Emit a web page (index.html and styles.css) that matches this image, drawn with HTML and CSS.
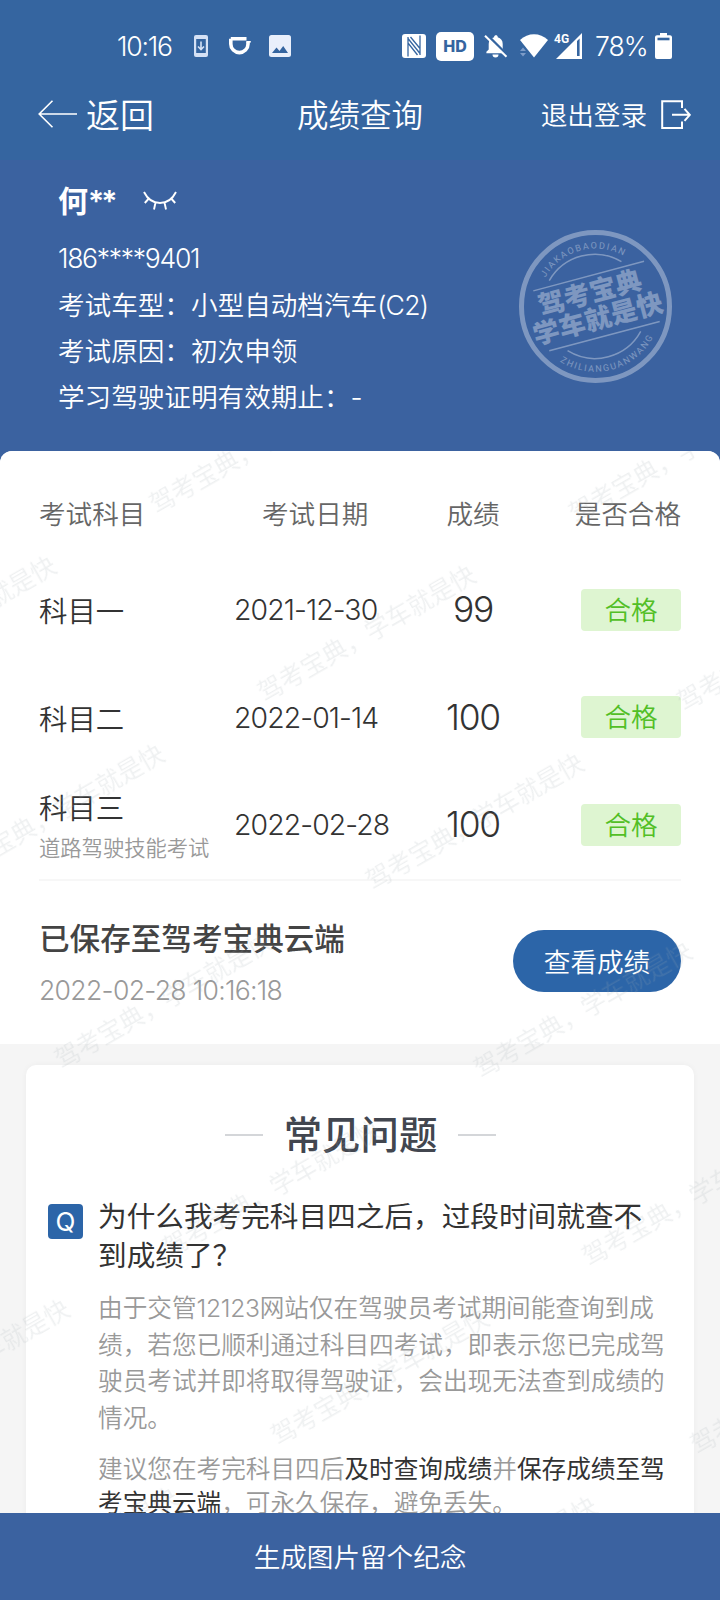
FILE: index.html
```
<!DOCTYPE html>
<html lang="zh-CN">
  <head>
    <meta charset="UTF-8" />
    <meta name="viewport" content="width=device-width, initial-scale=1.0" />
    <title>成绩查询</title>
    <link rel="stylesheet" href="styles.css">
  </head>
  <body>
    <div class="top">
      <div class="status-bar">
        <div class="status-left">
          <span class="clock">10:16</span>
          <svg class="icon-update" width="14" height="22" viewBox="0 0 14 22">
            <rect width="14" height="22" rx="2" fill="#d5e1f5" />
            <rect x="2.2" y="4" width="9.6" height="14" fill="#3565a0" />
            <path d="M7 6.5v8M4 11.5l3 3 3-3" fill="none" stroke="#d5e1f5" stroke-width="1.6" />
          </svg>
          <svg class="icon-didi" width="22" height="18" viewBox="0 0 22 18">
            <path d="M1.8 1.8H17.5M1.8 1.8V7a8.6 8.6 0 0 0 17.2 0V4.5" fill="none" stroke="#fff" stroke-width="3.6" />
            <path d="M17.5 4.8h4.3" stroke="#fff" stroke-width="1.6" />
          </svg>
          <svg class="icon-photo" width="22" height="22" viewBox="0 0 22 22">
            <rect width="22" height="22" rx="2.5" fill="#e9effb" />
            <path d="M3 18l4.5-5.5 3 3.5 3.7-5L19 18z" fill="#3565a0" />
          </svg>
        </div>
        <div class="status-right">
          <svg width="24" height="24" viewBox="0 0 24 24">
            <rect width="24" height="24" rx="3" fill="#fff" />
            <path d="M6 22.5V3M6 4.5l12 15M18 21V1.5M8.5 3L18 14.5M6 9l9.5 12" fill="none" stroke="#3565a0" stroke-width="1.3" />
          </svg>
          <span class="hd">HD</span>
          <svg class="icon-mute" width="24" height="24" viewBox="0 0 24 24">
            <path d="M12 1.2c1 0 1.7.6 1.7 1.5v.5c3.2.8 5 3.4 5 6.7v5.3l2.2 2.6v1.5H2.4v-1.5l2.3-2.3v-5.6c0-3.3 1.9-6 5.4-6.7v-.5c0-.9.9-1.5 1.9-1.5z" fill="#fff" />
            <path d="M8.5 20.5h6a3 3 0 0 1-6 0z" fill="#fff" />
            <path d="M2.5 .5l21 21" stroke="#3565a0" stroke-width="3" />
            <path d="M1 1.8l21.5 21" stroke="#fff" stroke-width="2" />
          </svg>
          <svg class="icon-wifi" width="28" height="24" viewBox="0 0 28 24">
            <path d="M0 6C8-1.6 20-1.6 28 6L14 23.5z" fill="#fff" />
            <path d="M0 17l3-3.5 3 3.5zM0 19l3 3.5 3-3.5z" fill="#7d9cc8" />
          </svg>
          <svg class="icon-signal" width="27" height="26" viewBox="0 0 27 26">
            <path d="M27 0v26H1z" fill="#fff" />
            <path d="M22 8l2.6-2.5V23H22z" fill="#3565a0" />
            <path d="M0 0h16v11H0z" fill="#3565a0" />
            <text x="-1" y="10" class="net">4G</text>
          </svg>
          <span class="battery-text">78%</span>
          <svg width="17" height="26" viewBox="0 0 17 26">
            <path d="M5 0h7v2.2h3A2 2 0 0 1 17 4v20a2 2 0 0 1-2 2H2a2 2 0 0 1-2-2V4a2 2 0 0 1 2-1.8h3z" fill="#fff" />
            <path d="M2.5 4.7h12v2.6h-12z" fill="#3565a0" />
          </svg>
        </div>
      </div>
      <div class="nav">
        <a class="back">
          <svg width="39" height="28" viewBox="0 0 39 28">
            <path d="M14.5 .7L1.2 14l13.3 13.3M1.2 14H39" fill="none" stroke="#fff" stroke-width="1.6" />
          </svg>
          <span>返回</span>
        </a>
        <h1>成绩查询</h1>
        <a class="logout">
          <span>退出登录</span>
          <svg width="30" height="30" viewBox="0 0 30 30">
            <path d="M21 8V1.2H1.2V28H21v-6.5M11 14.8h17.5M23.5 8.8l5.3 6-5.3 6" fill="none" stroke="#fff" stroke-width="2" />
          </svg>
        </a>
      </div>
    </div>

    <div class="profile">
      <div class="info">
        <div class="name">
          <span>何<i>**</i></span>
          <svg width="34" height="20" viewBox="0 0 34 20">
            <path d="M1 1c3.5 7 9.5 11 16 11S29.5 8 33 1M5.8 7.5L1.8 12M12.5 11.5L11 18.5M21.5 11.5L23 18.5M28.2 7.5L32.2 12" fill="none" stroke="#fff" stroke-width="1.9" />
          </svg>
        </div>
        <p class="phone">186****9401</p>
        <p>考试车型：小型自动档汽车<span class="type">(C2)</span></p>
        <p>考试原因：初次申领</p>
        <p>学习驾驶证明有效期止：-</p>
      </div>
      <svg class="stamp" viewBox="117 60 460 460">
        <defs>
          <path id="arc-top" d="M196 203A174 174 0 0 1 434 139" />
          <path id="arc-bottom" d="M240 455A197 197 0 0 0 522 379" />
        </defs>
        <circle cx="347" cy="290" r="222.5" class="line" stroke-width="15" />
        <path class="line" stroke-width="4.5" d="M208 212A158 158 0 0 1 425 155M263 423A157 157 0 0 0 483 365M160 243L493 154M208 423L540 335" />
        <text class="pinyin"><textPath href="#arc-top" textLength="270">JIAKAOBAODIAN</textPath></text>
        <text class="pinyin"><textPath href="#arc-bottom" textLength="324">ZHILIANGUANWANG</textPath></text>
        <text class="slogan" transform="translate(330 248) rotate(-15)" y="29" textLength="318">驾考宝典</text>
        <text class="slogan" transform="translate(354 326) rotate(-15)" y="29" textLength="400">学车就是快</text>
      </svg>
    </div>

    <div class="content">
      <div class="scores">
        <div class="row head">
          <span>考试科目</span>
          <span class="date">考试日期</span>
          <span class="score">成绩</span>
          <span class="result">是否合格</span>
        </div>
        <div class="row">
          <div>科目一</div>
          <span class="date">2021-12-30</span>
          <span class="score">99</span>
          <span class="badge">合格</span>
        </div>
        <div class="row">
          <div>科目二</div>
          <span class="date">2022-01-14</span>
          <span class="score">100</span>
          <span class="badge">合格</span>
        </div>
        <div class="row">
          <div>科目三<small>道路驾驶技能考试</small></div>
          <span class="date">2022-02-28</span>
          <span class="score">100</span>
          <span class="badge">合格</span>
        </div>
        <div class="saved">
          <div>
            <h2>已保存至驾考宝典云端</h2>
            <time>2022-02-28 10:16:18</time>
          </div>
          <button class="btn">查看成绩</button>
        </div>
      </div>

      <div class="faq">
        <h3>常见问题</h3>
        <div class="qa">
          <span class="q-icon">Q</span>
          <div class="qa-body">
            <h4>为什么我考完科目四之后，过段时间就查不到成绩了？</h4>
            <p>由于交管<span class="num">12123</span>网站仅在驾驶员考试期间能查询到成绩，若您已顺利通过科目四考试，即表示您已完成驾驶员考试并即将取得驾驶证，会出现无法查到成绩的情况。</p>
            <p class="tip">建议您在考完科目四后<b>及时查询成绩</b>并<b>保存成绩至驾考宝典云端</b>，可永久保存，避免丢失。</p>
          </div>
        </div>
      </div>

      <svg class="watermark" width="720" height="1062">
        <defs>
          <pattern id="wm" width="359" height="217" patternUnits="userSpaceOnUse" patternTransform="translate(114 30) rotate(-29.9)">
            <text x="20" y="50">驾考宝典，学车就是快</text>
          </pattern>
        </defs>
        <rect width="720" height="1062" fill="url(#wm)" />
      </svg>
    </div>

    <div class="footer">生成图片留个纪念</div>
  </body>
</html>
```
FILE: styles.css
```
:root {
  --nav-color: #3565a0;
  --header-color: #3b62a0;
  --btn-color: #2c65a8;
  --white: #fff;
}

* {
  margin: 0;
  padding: 0;
  box-sizing: border-box;
}

body {
  width: 720px;
  height: 1600px;
  overflow: hidden;
  display: flex;
  flex-direction: column;
  background-color: var(--header-color);
  color: #333;
  font-family: Inter, "Noto Sans CJK SC", sans-serif;
  font-size: 26.6px;
  font-weight: 350;
}

svg {
  display: block;
  flex: none;
}

.top {
  height: 160px;
  background-color: var(--nav-color);
  color: var(--white);
}

.status-bar {
  height: 72px;
  padding: 20px 48px 0 117px;
  display: flex;
  justify-content: space-between;
  font-weight: 300;
}

.status-left,
.status-right {
  display: flex;
  align-items: center;
}

.clock {
  width: 77px;
  letter-spacing: -1.2px;
}

.icon-didi {
  margin-left: 21px;
}

.icon-photo {
  margin-left: 18px;
}

.hd {
  width: 38px;
  height: 29px;
  margin: 0 10px;
  border-radius: 5px;
  background-color: var(--white);
  color: var(--nav-color);
  font-size: 16px;
  font-weight: 800;
  line-height: 29px;
  text-align: center;
}

.icon-wifi {
  margin-left: 12px;
  overflow: visible;
}

.icon-signal {
  margin-left: 7px;
  overflow: visible;
}

.net {
  font-family: Roboto, sans-serif;
  font-size: 12px;
  font-weight: 700;
  fill: #fff;
}

.battery-text {
  width: 52px;
  margin: 0 8px 0 13px;
  letter-spacing: -1px;
}

.nav {
  height: 84px;
  padding: 0 29px;
  display: grid;
  grid-template-columns: 1fr auto 1fr;
  align-items: center;
}

.nav h1 {
  font-size: 31.5px;
  font-weight: 350;
}

.nav h1,
.nav span {
  padding-bottom: 2px;
}

.back,
.logout {
  display: flex;
  align-items: center;
}

.back {
  margin-left: 9px;
  gap: 9px;
  font-size: 34px;
}

.logout {
  justify-content: flex-end;
  gap: 14px;
}

.logout svg {
  margin-top: 2px;
}

.profile {
  height: 291px;
  padding: 14px 48px 0 58px;
  display: flex;
  justify-content: space-between;
  color: var(--white);
}

.name {
  height: 50px;
  display: flex;
  align-items: center;
  gap: 29px;
  font-size: 30px;
  font-weight: 600;
}

.name i {
  font-style: normal;
  letter-spacing: -3px;
}

.name svg {
  margin-top: 4px;
}

.info p {
  line-height: 46px;
}

.info .phone {
  height: 58px;
  padding-top: 11px;
  letter-spacing: -1.3px;
}

.type {
  letter-spacing: -0.8px;
}

.stamp {
  width: 153px;
  height: 153px;
  margin-top: 56px;
  opacity: 0.34;
}

.stamp .line {
  fill: none;
  stroke: #fff;
}

.stamp text {
  fill: #fff;
}

.pinyin {
  font-family: Roboto, sans-serif;
  font-size: 27px;
  font-weight: 400;
}

.slogan {
  font-family: "Noto Sans CJK SC", sans-serif;
  font-size: 79px;
  font-weight: 900;
  text-anchor: middle;
}

.content {
  height: 1062px;
  position: relative;
  overflow: hidden;
  border-radius: 12px 12px 0 0;
  background-color: #f5f5f5;
}

.scores {
  height: 593px;
  padding: 20px 39px 0;
  background-color: var(--white);
}

.row {
  height: 107.5px;
  display: grid;
  grid-template-columns: 195px 181px 116px 150px;
  align-items: center;
  font-size: 28.4px;
}

.row.head {
  height: 85px;
  padding-bottom: 2px;
  color: #666;
  font-size: 26.6px;
}

.row small {
  display: block;
  margin-top: 6px;
  color: #999;
  font-size: 21.3px;
  line-height: 30px;
  white-space: nowrap;
}

.date {
  font-weight: 300;
  letter-spacing: -0.9px;
}

.head .date {
  padding-left: 28px;
  font-weight: inherit;
  letter-spacing: 0;
}

.score {
  font-size: 35.4px;
  font-weight: 300;
  letter-spacing: -1.2px;
  text-align: center;
}

.head .score {
  font-size: 26.6px;
  font-weight: inherit;
  letter-spacing: 0;
}

.result {
  justify-self: end;
}

.badge {
  width: 100px;
  height: 42px;
  justify-self: end;
  border-radius: 4px;
  background-color: #def5d1;
  color: #52bf26;
  font-size: 26.6px;
  line-height: 42px;
  text-align: center;
}

.saved {
  height: 164px;
  border-top: 2px solid #f7f7f7;
  display: flex;
  justify-content: space-between;
  align-items: center;
}

.saved h2 {
  padding-top: 2px;
  color: #444;
  font-size: 30.6px;
  font-weight: 500;
  line-height: 46px;
}

.saved time {
  display: block;
  margin-top: 8px;
  color: #999;
  font-size: 26.6px;
  font-weight: 300;
  line-height: 40px;
  letter-spacing: -0.7px;
}

.btn {
  width: 168px;
  height: 62px;
  margin-bottom: 1px;
  padding-bottom: 2px;
  border: none;
  border-radius: 31px;
  background-color: var(--btn-color);
  color: var(--white);
  font: inherit;
}

.faq {
  height: 560px;
  margin: 21px 26px 0;
  padding: 39px 21px 0 22px;
  border-radius: 10px;
  background-color: var(--white);
  box-shadow: 0 0 6px rgba(0, 0, 0, 0.04);
}

.faq h3 {
  height: 56px;
  display: flex;
  justify-content: center;
  align-items: center;
  gap: 21px;
  color: #42464f;
  font-size: 38.4px;
  font-weight: 500;
}

.faq h3::before,
.faq h3::after {
  content: "";
  width: 38px;
  height: 2px;
  margin-top: 6px;
  background-color: #d4d6d9;
}

.qa {
  margin-top: 37px;
  display: flex;
}

.q-icon {
  width: 35px;
  height: 35px;
  margin: 7px 15px 0 0;
  flex: none;
  border-radius: 4px;
  background-color: var(--btn-color);
  color: var(--white);
  font-size: 26px;
  font-weight: 400;
  line-height: 35px;
  text-align: center;
}

.qa-body {
  width: 570px;
}

.qa h4 {
  width: 550px;
  font-size: 28.65px;
  font-weight: 400;
  line-height: 39px;
}

.qa p {
  margin-top: 15px;
  color: #999;
  font-size: 24.65px;
  line-height: 36.6px;
}

.qa .num {
  font-weight: 300;
  letter-spacing: -0.3px;
}

.qa .tip {
  margin-top: 17px;
  line-height: 33.5px;
}

.qa b {
  color: #333;
  font-weight: 400;
}

.watermark {
  position: absolute;
  top: 0;
  left: 0;
  pointer-events: none;
}

.watermark text {
  fill: #a0aab4;
  fill-opacity: 0.18;
  font-size: 24.6px;
}

.footer {
  height: 87px;
  background-color: var(--header-color);
  color: var(--white);
  line-height: 88px;
  text-align: center;
}
```
